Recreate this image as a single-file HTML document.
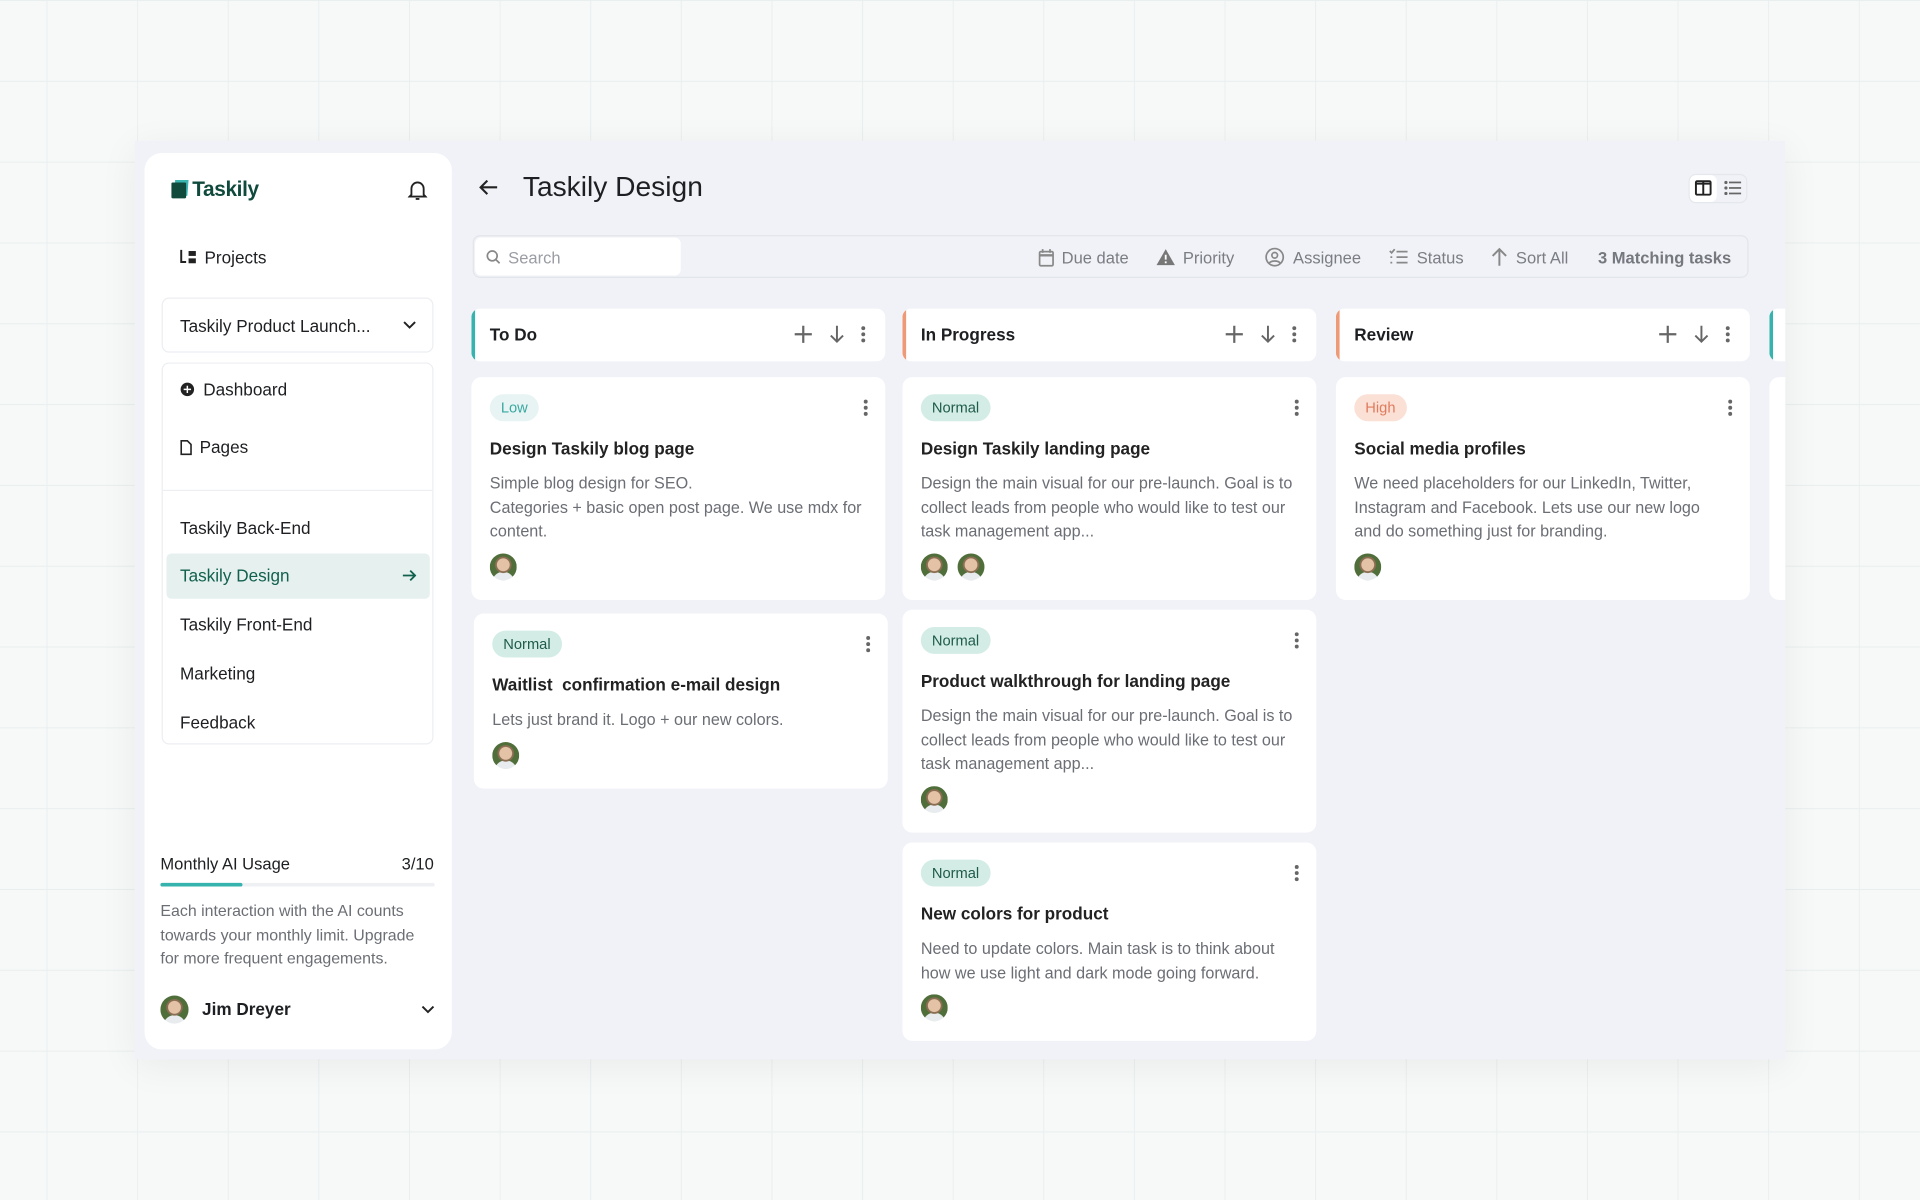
<!DOCTYPE html>
<html><head><meta charset="utf-8"><style>
*{margin:0;padding:0;box-sizing:border-box}
html,body{width:1920px;height:1200px;overflow:hidden;background:#f7f9f9}
#s{position:absolute;left:0;top:0;width:1568px;height:980px;transform:scale(1.22449);transform-origin:0 0;font-family:"Liberation Sans",sans-serif;color:#1d1f22;
background-color:#f7f9f9;background-image:linear-gradient(#e9efee 1px,transparent 1px),linear-gradient(90deg,#e9efee 1px,transparent 1px);background-size:74px 66px;background-position:38px 0}
.a{position:absolute}
#panel{left:110px;top:115px;width:1348px;height:750px;background:#f0f2f7;box-shadow:0 6px 30px rgba(0,0,0,.06);overflow:hidden}
#side{left:8px;top:10px;width:251px;height:732px;background:#fff;border-radius:14px}
.box{position:absolute;border:1px solid #eceef2;border-radius:6px;background:#fff}
.nav{position:absolute;left:29px;font-size:14px;color:#1d1f22}
.col{position:absolute;width:338px}
.hd{position:absolute;left:0;top:0;width:338px;height:43px;background:#fff;border-radius:7px;overflow:hidden}
.hd .bar{position:absolute;left:0;top:0;width:3px;height:43px}
.hd .t{position:absolute;left:15px;top:13px;font-size:14px;font-weight:bold}
.hd svg{position:absolute;top:13px}
.card{position:absolute;width:338px;background:#fff;border-radius:8px}
.bd{position:absolute;left:15px;top:14px;height:22px;padding:0 9px;border-radius:11px;font-size:12px;line-height:22px}
.ct{position:absolute;left:15px;top:50px;font-size:14px;font-weight:bold;color:#222}
.cd{position:absolute;left:15px;top:77px;width:315px;font-size:13.2px;line-height:19.5px;color:#6b6e74}
.av{position:absolute;width:22px;height:22px;border-radius:50%;background:radial-gradient(circle at 50% 42%,#e3c2a6 0 5px,#8a6d52 5.5px 6.5px,transparent 7px),radial-gradient(circle at 50% 110%,#e9ecee 0 9px,transparent 9.5px),#4f6e3a}
.dots{position:absolute;right:14px;top:18px}
.tb{position:absolute;top:10px;font-size:13.5px;color:#7a7d83}
</style></head><body><div id="s">
<div id="panel" class="a">
 <div id="side" class="a">
  <svg class="a" style="left:21px;top:21px" width="16" height="17" viewBox="0 0 16 17"><path d="M4 1h11l-1 13H4z" fill="#3ab5b0"/><rect x="1" y="3" width="12" height="13" rx="1" fill="#0f4a3c"/></svg>
  <div class="a" style="left:39px;top:20px;font-size:17px;font-weight:bold;color:#0f4a3c;letter-spacing:-.3px">Taskily</div>
  <svg class="a" style="left:215px;top:22px" width="16" height="17" viewBox="0 0 16 17" fill="none" stroke="#222" stroke-width="1.5"><path d="M3 12V7a5 5 0 0110 0v5l1.5 1.5h-13z"/><path d="M6.5 15.5h3"/></svg>
  <svg class="a" style="left:29px;top:79px" width="13" height="12" viewBox="0 0 13 12"><path d="M1 0v10h4" stroke="#222" stroke-width="1.6" fill="none"/><rect x="7" y="1" width="6" height="4" fill="#222"/><rect x="7" y="7" width="6" height="4" fill="#222"/></svg>
  <div class="nav" style="left:49px;top:77px">Projects</div>
  <div class="box" style="left:14px;top:118px;width:222px;height:45px"></div>
  <div class="nav" style="top:133px">Taskily Product Launch...</div>
  <svg class="a" style="left:211px;top:137px" width="11" height="7" viewBox="0 0 11 7"><path d="M1 1l4.5 4.5L10 1" stroke="#222" stroke-width="1.6" fill="none"/></svg>
  <div class="box" style="left:14px;top:171px;width:222px;height:312px"></div>
  <div class="a" style="left:15px;top:275px;width:220px;height:1px;background:#eceef2"></div>
  <svg class="a" style="left:29px;top:187px" width="12" height="12" viewBox="0 0 12 12"><circle cx="6" cy="6" r="5.5" fill="#222"/><path d="M3 6h6M6 3v6" stroke="#fff" stroke-width="1.2"/></svg>
  <div class="nav" style="left:48px;top:185px">Dashboard</div>
  <svg class="a" style="left:29px;top:234px" width="10" height="13" viewBox="0 0 10 13"><path d="M1 1h5l3 3v8H1z" stroke="#222" stroke-width="1.3" fill="none"/></svg>
  <div class="nav" style="left:45px;top:232px">Pages</div>
  <div class="nav" style="top:298px">Taskily Back-End</div>
  <div class="a" style="left:18px;top:327px;width:215px;height:37px;background:#e6f1ef;border-radius:4px"></div>
  <div class="nav" style="top:337px;color:#12604e">Taskily Design</div>
  <svg class="a" style="left:210px;top:340px" width="12" height="10" viewBox="0 0 12 10"><path d="M1 5h10M7 1l4 4-4 4" stroke="#12604e" stroke-width="1.5" fill="none"/></svg>
  <div class="nav" style="top:377px">Taskily Front-End</div>
  <div class="nav" style="top:417px">Marketing</div>
  <div class="nav" style="top:457px">Feedback</div>
  <div class="a" style="left:13px;top:573px;font-size:13.5px">Monthly AI Usage</div>
  <div class="a" style="left:210px;top:573px;font-size:13.5px">3/10</div>
  <div class="a" style="left:13px;top:596px;width:224px;height:3px;background:#eef0f4;border-radius:2px"><div style="width:67px;height:3px;background:#36b3ad;border-radius:2px"></div></div>
  <div class="a" style="left:13px;top:609px;width:222px;font-size:13px;line-height:19.5px;color:#6b6e74">Each interaction with the AI counts towards your monthly limit. Upgrade for more frequent engagements.</div>
  <div class="av" style="left:13px;top:688px;width:23px;height:23px"></div>
  <div class="a" style="left:47px;top:691px;font-size:14px;font-weight:bold">Jim Dreyer</div>
  <svg class="a" style="left:226px;top:696px" width="11" height="7" viewBox="0 0 11 7"><path d="M1 1l4.5 4.5L10 1" stroke="#222" stroke-width="1.6" fill="none"/></svg>
 </div>
 <svg class="a" style="left:281px;top:31px" width="16" height="14" viewBox="0 0 16 14"><path d="M15 7H2M7 1.5L1.5 7 7 12.5" stroke="#222" stroke-width="1.7" fill="none"/></svg>
 <div class="a" style="left:317px;top:24px;font-size:23px;color:#1d1f22">Taskily Design</div>
 <div class="a" style="left:1269px;top:27px;width:48px;height:24px;border:1px solid #e4e7ec;border-radius:6px"></div>
 <div class="a" style="left:1270px;top:28px;width:22px;height:22px;background:#fff;border-radius:5px"></div>
 <svg class="a" style="left:1274px;top:32px" width="14" height="13" viewBox="0 0 14 13"><rect x="1" y="1" width="12" height="11" rx="1" fill="none" stroke="#222" stroke-width="1.6"/><path d="M7 1v11M1 3h12" stroke="#222" stroke-width="1.6"/></svg>
 <svg class="a" style="left:1298px;top:32px" width="14" height="13" viewBox="0 0 14 13" fill="#666"><circle cx="1.5" cy="2" r="1.3"/><circle cx="1.5" cy="6.5" r="1.3"/><circle cx="1.5" cy="11" r="1.3"/><rect x="4" y="1.3" width="10" height="1.4"/><rect x="4" y="5.8" width="10" height="1.4"/><rect x="4" y="10.3" width="10" height="1.4"/></svg>
 <div class="a" style="left:276px;top:77px;width:1042px;height:35px;border:1px solid #e2e5ea;border-radius:6px">
  <div class="a" style="left:1px;top:1px;width:168px;height:31px;background:#fff;border-radius:5px"></div>
  <svg class="a" style="left:10px;top:11px" width="12" height="12" viewBox="0 0 12 12"><circle cx="5" cy="5" r="4" fill="none" stroke="#888" stroke-width="1.4"/><path d="M8 8l3 3" stroke="#888" stroke-width="1.4"/></svg>
  <div class="tb" style="left:28px;color:#9a9da3">Search</div>
  <svg class="a" style="left:461px;top:10px" width="13" height="15" viewBox="0 0 13 15"><rect x="1" y="2.5" width="11" height="11.5" rx="1" fill="none" stroke="#888" stroke-width="1.4"/><path d="M1 5.5h11" stroke="#888" stroke-width="2"/><path d="M3.5 0.5v3M9.5 0.5v3" stroke="#888" stroke-width="1.4"/></svg>
  <div class="tb" style="left:480px">Due date</div>
  <svg class="a" style="left:557px;top:10px" width="16" height="14" viewBox="0 0 16 14"><path d="M8 0.5L15.5 13.5H0.5z" fill="#777"/><path d="M8 5v4M8 10.5v1.5" stroke="#fff" stroke-width="1.5"/></svg>
  <div class="tb" style="left:579px">Priority</div>
  <svg class="a" style="left:646px;top:9px" width="16" height="16" viewBox="0 0 16 16" fill="none" stroke="#888" stroke-width="1.4"><circle cx="8" cy="8" r="7"/><circle cx="8" cy="6.5" r="2.3"/><path d="M3.5 13c1.5-2.5 7.5-2.5 9 0"/></svg>
  <div class="tb" style="left:669px">Assignee</div>
  <svg class="a" style="left:747px;top:10px" width="16" height="14" viewBox="0 0 16 14" stroke="#888" stroke-width="1.4" fill="none"><path d="M1 2l1.5 1.5L5 0.5M6.5 2.5h9M6.5 7h9M6.5 11.5h9M1.5 7h1.5M1.5 11.5h1.5"/></svg>
  <div class="tb" style="left:770px">Status</div>
  <svg class="a" style="left:831px;top:9px" width="13" height="16" viewBox="0 0 13 16"><path d="M6.5 15V2M1 7l5.5-5.5L12 7" stroke="#888" stroke-width="1.6" fill="none"/></svg>
  <div class="tb" style="left:851px">Sort All</div>
  <div class="tb" style="left:918px;font-weight:bold;color:#75787e">3 Matching tasks</div>
 </div>
</div>
</div>
<script>
var ic='<svg style="left:263px" width="16" height="16" viewBox="0 0 16 16"><path d="M8 1v14M1 8h14" stroke="#666" stroke-width="1.8"/></svg><svg style="left:292px" width="13" height="16" viewBox="0 0 13 16"><path d="M6.5 1v13M1.5 9l5 5 5-5" stroke="#666" stroke-width="1.6" fill="none"/></svg><svg style="left:318px" width="4" height="16" viewBox="0 0 4 16" fill="#666"><circle cx="2" cy="3" r="1.6"/><circle cx="2" cy="8" r="1.6"/><circle cx="2" cy="13" r="1.6"/></svg>';
var dots='<svg class="dots" width="4" height="14" viewBox="0 0 4 14" fill="#666"><circle cx="2" cy="2" r="1.6"/><circle cx="2" cy="7" r="1.6"/><circle cx="2" cy="12" r="1.6"/></svg>';
var B={Low:['#e7f4f3','#3aa8a2'],Normal:['#d3ede6','#1f5a4a'],High:['#fbe0d6','#e07b5c']};
var P=document.getElementById('panel');
function col(x,name,color,cards){var h='<div class="col" style="left:'+(x-110)+'px;top:137px"><div class="hd"><div class="bar" style="background:'+color+'"></div><div class="t">'+name+'</div>'+ic+'</div></div>';P.insertAdjacentHTML('beforeend',h);
cards.forEach(function(c){var lines=c.d.length;var ay=77+lines*19.5+8;var ht=ay+38;var s='<div class="card" style="left:'+(x-110+(c.dx||0))+'px;top:'+(c.y-115)+'px;height:'+ht+'px"><div class="bd" style="background:'+B[c.b][0]+';color:'+B[c.b][1]+'">'+c.b+'</div>'+dots+'<div class="ct">'+c.t+'</div><div class="cd">'+c.d.join('<br>')+'</div>';
for(var i=0;i<(c.n||1);i++)s+='<div class="av" style="left:'+(15+i*30)+'px;top:'+ay+'px"></div>';s+='</div>';P.insertAdjacentHTML('beforeend',s);});}
col(385,'To Do','#36b3ad',[{y:308,b:'Low',t:'Design Taskily blog page',d:['Simple blog design for SEO.','Categories + basic open post page. We use mdx for','content.']},{y:501,dx:2,b:'Normal',t:'Waitlist&nbsp; confirmation e-mail design',d:['Lets just brand it. Logo + our new colors.']}]);
col(737,'In Progress','#ee9a77',[{y:308,b:'Normal',t:'Design Taskily landing page',d:['Design the main visual for our pre-launch. Goal is to','collect leads from people who would like to test our','task management app...'],n:2},{y:498,b:'Normal',t:'Product walkthrough for landing page',d:['Design the main visual for our pre-launch. Goal is to','collect leads from people who would like to test our','task management app...']},{y:688,b:'Normal',t:'New colors for product',d:['Need to update colors. Main task is to think about','how we use light and dark mode going forward.']}]);
col(1091,'Review','#ee9a77',[{y:308,b:'High',t:'Social media profiles',d:['We need placeholders for our LinkedIn, Twitter,','Instagram and Facebook. Lets use our new logo','and do something just for branding.']}]);
col(1445,'Done','#36b3ad',[{y:308,b:'Low',t:'',d:['','','']}]);
</script>
</body></html>
